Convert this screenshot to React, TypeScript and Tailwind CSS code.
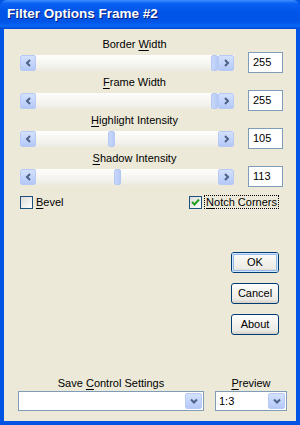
import React from 'react'

const font = { fontFamily: '"Liberation Sans", Arial, sans-serif' }

const Chevron = ({ dir }: { dir: 'left' | 'right' | 'down' }) => {
  const pts = dir === 'left' ? '5,1 2,4 5,7' : dir === 'right' ? '2,1 5,4 2,7' : '1,2 4,5 7,2'
  return (
    <svg width={dir === 'down' ? 8 : 7} height={8} viewBox={dir === 'down' ? '0 0 8 7' : '0 0 7 8'}>
      <polyline points={pts} fill="none" stroke="#4d6185" strokeWidth={2} />
    </svg>
  )
}

const ArrowButton = ({ dir }: { dir: 'left' | 'right' }) => (
  <div className="flex h-[16px] w-[16px] shrink-0 items-center justify-center rounded-[2px] border border-[#b7caf5] bg-[linear-gradient(to_bottom,#d4e0fc,#c1d3fb_60%,#b4c8f6)]">
    <Chevron dir={dir} />
  </div>
)

const Label = ({ text, u }: { text: string; u: number }) => (
  <>
    {text.slice(0, u)}
    <span className="underline underline-offset-[2px]">{text[u]}</span>
    {text.slice(u + 1)}
  </>
)

const SliderBlock = ({ label, u, value }: { label: string; u: number; value: number }) => {
  const pos = Math.round((value / 255) * 175)
  return (
    <div className="flex h-[38px] flex-col">
      <div className="h-[16px] w-[229px] text-center text-[11px] leading-[16px] text-black">
        <Label text={label} u={u} />
      </div>
      <div className="flex h-[21px] items-center">
        <div className="flex h-[16px] w-[214px] bg-[linear-gradient(to_bottom,#fefefd,#f3f2ec_70%,#eceae0)]">
          <ArrowButton dir="left" />
          <div className="relative flex-1">
            <div
              className="absolute top-0 h-[16px] w-[7px] rounded-[2px] border border-[#b5c8f3] bg-[linear-gradient(to_right,#c8d7fb,#b8cbf7)]"
              style={{ left: pos }}
            />
          </div>
          <ArrowButton dir="right" />
        </div>
        <div className="ml-[14px] flex h-[21px] w-[35px] items-center border border-[#7f9db9] bg-white pl-[4px] text-[11px] text-black">
          {value}
        </div>
      </div>
    </div>
  )
}

const Button = ({ children, def = false }: { children: React.ReactNode; def?: boolean }) => (
  <div className="flex h-[21px] w-[48px] items-center justify-center rounded-[3px] border border-[#003c74] bg-[linear-gradient(to_bottom,#ffffff,#f4f3ee_40%,#ecebe6_80%,#d6d0c5)] text-[11px] text-black">
    <div
      className={`flex h-full w-full items-center justify-center rounded-[2px] ${
        def ? 'shadow-[inset_0_0_0_1px_#cee7ff,inset_0_0_0_2px_#98b8ea]' : ''
      }`}
    >
      {children}
    </div>
  </div>
)

const Combo = ({ value, width }: { value: string; width: string }) => (
  <div className={`flex h-[20px] ${width} items-center border border-[#7f9db9] bg-white p-[1px]`}>
    <div className="flex-1 pl-[2px] text-[11px] text-black">{value}</div>
    <div className="flex h-[16px] w-[17px] items-center justify-center rounded-[2px] border border-[#b7caf5] bg-[linear-gradient(to_bottom,#d4e0fc,#c1d3fb_60%,#b4c8f6)]">
      <Chevron dir="down" />
    </div>
  </div>
)

export default function App() {
  return (
    <div className="flex h-[425px] w-[300px] flex-col bg-[#0054e3]" style={font}>
      <div className="flex h-[29px] shrink-0 items-center rounded-t-[7px] bg-[linear-gradient(to_bottom,#3d8fff_0%,#0a61f2_12%,#0055ea_40%,#0054e6_75%,#0868f8_90%,#0047d0_100%)] pl-[7px]">
        <span className="text-[13.5px] font-bold text-white [text-shadow:1px_1px_0_#0a1e7a]">Filter Options Frame #2</span>
      </div>
      <div className="mx-[4px] mb-[4px] flex flex-1 flex-col bg-[#ece9d8]">
        <div className="pl-[16px] pt-[7px]">
          <SliderBlock label="Border Width" u={7} value={255} />
          <SliderBlock label="Frame Width" u={0} value={255} />
          <SliderBlock label="Highlight Intensity" u={0} value={105} />
          <SliderBlock label="Shadow Intensity" u={0} value={113} />
        </div>

        <div className="mt-[7px] flex items-center pl-[16px] pr-[17px] text-[11px] text-black">
          <div className="flex items-center">
            <div className="h-[13px] w-[13px] border border-[#1c5180] bg-[linear-gradient(135deg,#dcdcd7,#ffffff)]" />
            <span className="ml-[3px] leading-[14px]">
              <Label text="Bevel" u={0} />
            </span>
          </div>
          <div className="ml-auto flex items-center">
            <div className="flex h-[13px] w-[13px] items-center justify-center border border-[#1c5180] bg-[linear-gradient(135deg,#dcdcd7,#ffffff)]">
              <svg width="9" height="9" viewBox="0 0 9 9">
                <polyline points="1,4 3.5,6.5 8,1.5" fill="none" stroke="#21a121" strokeWidth={2} />
              </svg>
            </div>
            <span className="ml-[2px] border border-dotted border-black px-[1px] leading-[12px]">
              <Label text="Notch Corners" u={0} />
            </span>
          </div>
        </div>

        <div className="mt-[43px] flex flex-col items-end gap-[10px] pr-[17px]">
          <Button def>OK</Button>
          <Button>Cancel</Button>
          <Button>About</Button>
        </div>

        <div className="mt-auto flex gap-[11px] pb-[10px] pl-[14px] text-[11px] text-black">
          <div className="flex w-[186px] flex-col">
            <div className="h-[16px] text-center leading-[16px]">
              <Label text="Save Control Settings" u={5} />
            </div>
            <Combo value="" width="w-[186px]" />
          </div>
          <div className="flex w-[72px] flex-col">
            <div className="h-[16px] text-center leading-[16px]">
              <Label text="Preview" u={0} />
            </div>
            <Combo value="1:3" width="w-[72px]" />
          </div>
        </div>
      </div>
    </div>
  )
}
